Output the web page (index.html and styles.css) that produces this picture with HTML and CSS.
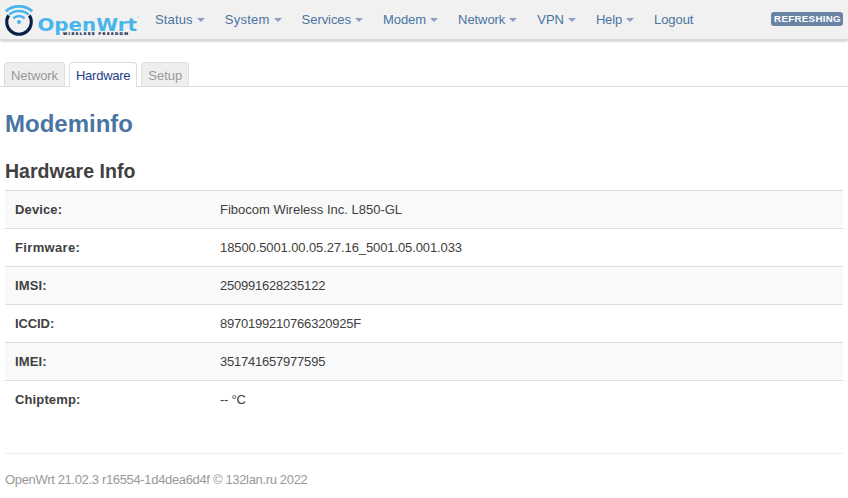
FILE: index.html
```html
<!DOCTYPE html>
<html lang="en">
<head>
<meta charset="utf-8">
<title>OpenWrt - Modeminfo</title>
<link rel="stylesheet" href="styles.css">
</head>
<body>
<header class="topbar">
  <a class="brand">
    <svg width="145" height="39" viewBox="0 0 145 39">
      <g fill="none" stroke="#48b5ec">
        <path d="M5.8 11.2 Q11 6.3 19 6.3 Q27 6.3 32.2 11.2" stroke-width="2.8"/>
        <path d="M9.3 14.6 Q13.5 11 19 11 Q24.5 11 28.7 14.6" stroke-width="2.7"/>
        <path d="M13.3 18.3 Q16 16 19 16 Q22 16 24.7 18.3" stroke-width="2.5"/>
      </g>
      <circle cx="19" cy="22" r="2" fill="#48b5ec"/>
      <path d="M8.6 15.4 A12.3 12.3 0 1 0 29.4 15.4" fill="none" stroke="#092044" stroke-width="3.1"/>
      <text class="logo-name" x="37.5" y="30.8" textLength="99.5" lengthAdjust="spacingAndGlyphs">OpenWrt</text>
      <circle cx="138.5" cy="17" r="0.8" fill="#9ccfea"/>
      <text class="logo-tag" x="63" y="35" textLength="65" lengthAdjust="spacing">WIRELESS FREEDOM</text>
    </svg>
  </a>
  <nav class="nav">
    <a class="menu status">Status</a>
    <a class="menu system">System</a>
    <a class="menu">Services</a>
    <a class="menu">Modem</a>
    <a class="menu">Network</a>
    <a class="menu">VPN</a>
    <a class="menu help">Help</a>
    <a>Logout</a>
  </nav>
  <span class="label">Refreshing</span>
</header>
<ul class="tabs">
  <li class="network">Network</li>
  <li class="active">Hardware</li>
  <li>Setup</li>
</ul>
<main class="content">
  <h2>Modeminfo</h2>
  <h3>Hardware Info</h3>
  <table class="info">
    <tr><th>Device:</th><td>Fibocom Wireless Inc. L850-GL</td></tr>
    <tr><th class="wide">Firmware:</th><td class="version">18500.5001.00.05.27.16_5001.05.001.033</td></tr>
    <tr><th>IMSI:</th><td class="number">250991628235122</td></tr>
    <tr><th class="tight">ICCID:</th><td class="number">8970199210766320925F</td></tr>
    <tr><th>IMEI:</th><td class="number">351741657977595</td></tr>
    <tr><th>Chiptemp:</th><td class="number">-- °C</td></tr>
  </table>
  <footer>OpenWrt 21.02.3 r16554-1d4dea6d4f © 132lan.ru 2022</footer>
</main>
</body>
</html>
```
FILE: styles.css
```css
* { box-sizing: border-box; }
body {
  margin: 0;
  background: #fff;
  color: #404040;
  font: 13px/18px "Liberation Sans", Arial, sans-serif;
}
.topbar {
  display: flex;
  height: 40px;
  padding-right: 5px;
  background: #f1f1f1;
  border-bottom: 1px solid #dadada;
  box-shadow: 0 1px 3px rgba(0, 0, 0, .25);
}
.brand { width: 145px; height: 39px; }
.brand svg { display: block; }
.logo-name { font: bold 17.5px "DejaVu Sans", sans-serif; fill: #48b5ec; }
.logo-tag { font: bold 3.8px "DejaVu Sans", sans-serif; fill: #092044; stroke: #092044; stroke-width: .2px; }
.nav { display: flex; }
.nav a { padding: 11px 10px 10px; color: #4a74a2; letter-spacing: -.06px; }
.nav .status { letter-spacing: .15px; }
.nav .system { letter-spacing: .25px; }
.nav .help { letter-spacing: -.15px; }
.menu::after {
  content: "";
  display: inline-block;
  margin-left: 4px;
  vertical-align: 2px;
  border: 4px solid transparent;
  border-top-color: #8e9dc7;
  border-bottom: 0;
}
.label {
  height: 14px;
  margin: 12px 0 0 auto;
  padding: 0 2px 0 3px;
  border-radius: 3px;
  background: #6983a5;
  color: #fff;
  font-size: 9.75px;
  font-weight: bold;
  letter-spacing: .3px;
  line-height: 14px;
  text-transform: uppercase;
}
.tabs {
  display: flex;
  gap: 4px;
  height: 25px;
  margin: 22px 0 0;
  padding: 0 4px;
  list-style: none;
  border-bottom: 1px solid #ddd;
}
.tabs li {
  height: 24px;
  padding: 4px 6px 0;
  border: 1px solid #ddd;
  border-bottom: 0;
  border-radius: 4px 4px 0 0;
  background: #eee;
  color: #999;
}
.tabs .network { letter-spacing: -.1px; }
.tabs .active { height: 25px; background: #fff; color: #1d3e85; letter-spacing: -.25px; }
.content { padding: 0 5px; }
h2 { margin: 19px 0 0; font-size: 24px; line-height: 36px; color: #4a74a2; }
h3 { margin: 11px 0 0; font-size: 19.5px; line-height: 36px; letter-spacing: .03px; }
.info {
  width: 100%;
  margin: 1px 0 0;
  border-collapse: separate;
  border-spacing: 0;
}
.info th, .info td {
  height: 38px;
  padding: 1px 10px 0;
  border-top: 1px solid #ddd;
  text-align: left;
}
.info th { width: 205px; letter-spacing: .13px; }
.info .wide { letter-spacing: .35px; }
.info .tight { letter-spacing: -.1px; }
.info .version { letter-spacing: -.1px; }
.info .number { letter-spacing: -.22px; }
.info tr:nth-child(odd) { background: #f9f9f9; }
footer {
  margin-top: 35px;
  padding-top: 17px;
  border-top: 1px solid #eee;
  color: #999;
  letter-spacing: -.34px;
}
```
